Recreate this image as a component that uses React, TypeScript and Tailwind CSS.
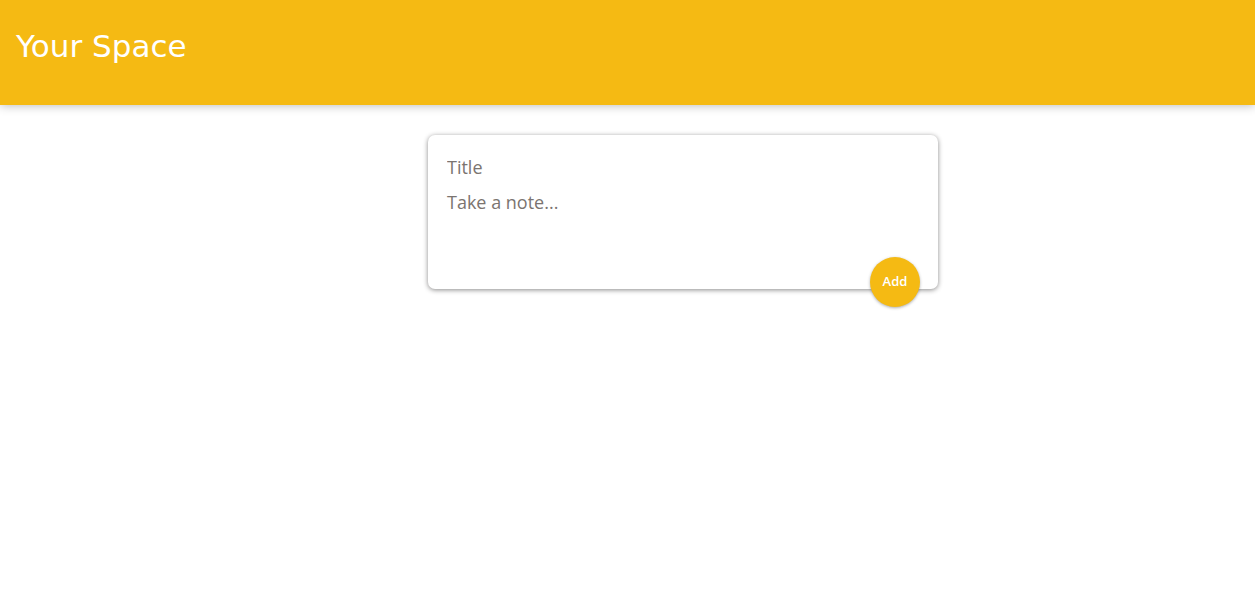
import React, { useState } from 'react';

const App: React.FC = () => {
  const [note, setNote] = useState({ title: '', content: '' });

  return (
    <div className="min-h-[590px] bg-white" style={{ fontFamily: '"Open Sans", "Noto Sans", sans-serif' }}>
      <header className="h-[105px] bg-[#f5ba13] px-4 pt-[24px] shadow-[0_0_10px_0_rgba(0,0,0,0.3)]">
        <h1
          className="text-[31px] leading-[44px] text-white font-normal"
          style={{ fontFamily: '"Comic Sans MS", "DejaVu Sans", sans-serif' }}
        >
          Your Space
        </h1>
      </header>

      <form
        className="relative ml-[428px] mt-[30px] w-[510px] h-[154px] bg-white rounded-[7px] p-[15px] shadow-[0_1px_5px_rgb(138,137,137)]"
        onSubmit={e => e.preventDefault()}
      >
        <input
          name="title"
          placeholder="Title"
          value={note.title}
          onChange={e => setNote({ ...note, title: e.target.value })}
          className="block w-full h-[34px] px-[4px] text-[18px] text-[#5f5a57] placeholder:text-[#7b7470] outline-none border-none"
        />
        <textarea
          name="content"
          placeholder="Take a note..."
          value={note.content}
          onChange={e => setNote({ ...note, content: e.target.value })}
          className="block w-full h-[90px] px-[4px] pt-[5px] pb-[4px] text-[18px] text-[#5f5a57] placeholder:text-[#7b7470] outline-none border-none resize-none"
        />
        <button
          type="submit"
          className="absolute right-[18px] bottom-[-18px] w-[50px] h-[50px] rounded-full bg-[#f5ba13] text-white text-[13px] font-semibold shadow-[0_1px_3px_rgba(51,51,51,0.4)] cursor-pointer outline-none border-none"
        >
          Add
        </button>
      </form>
    </div>
  );
};

export default App;
